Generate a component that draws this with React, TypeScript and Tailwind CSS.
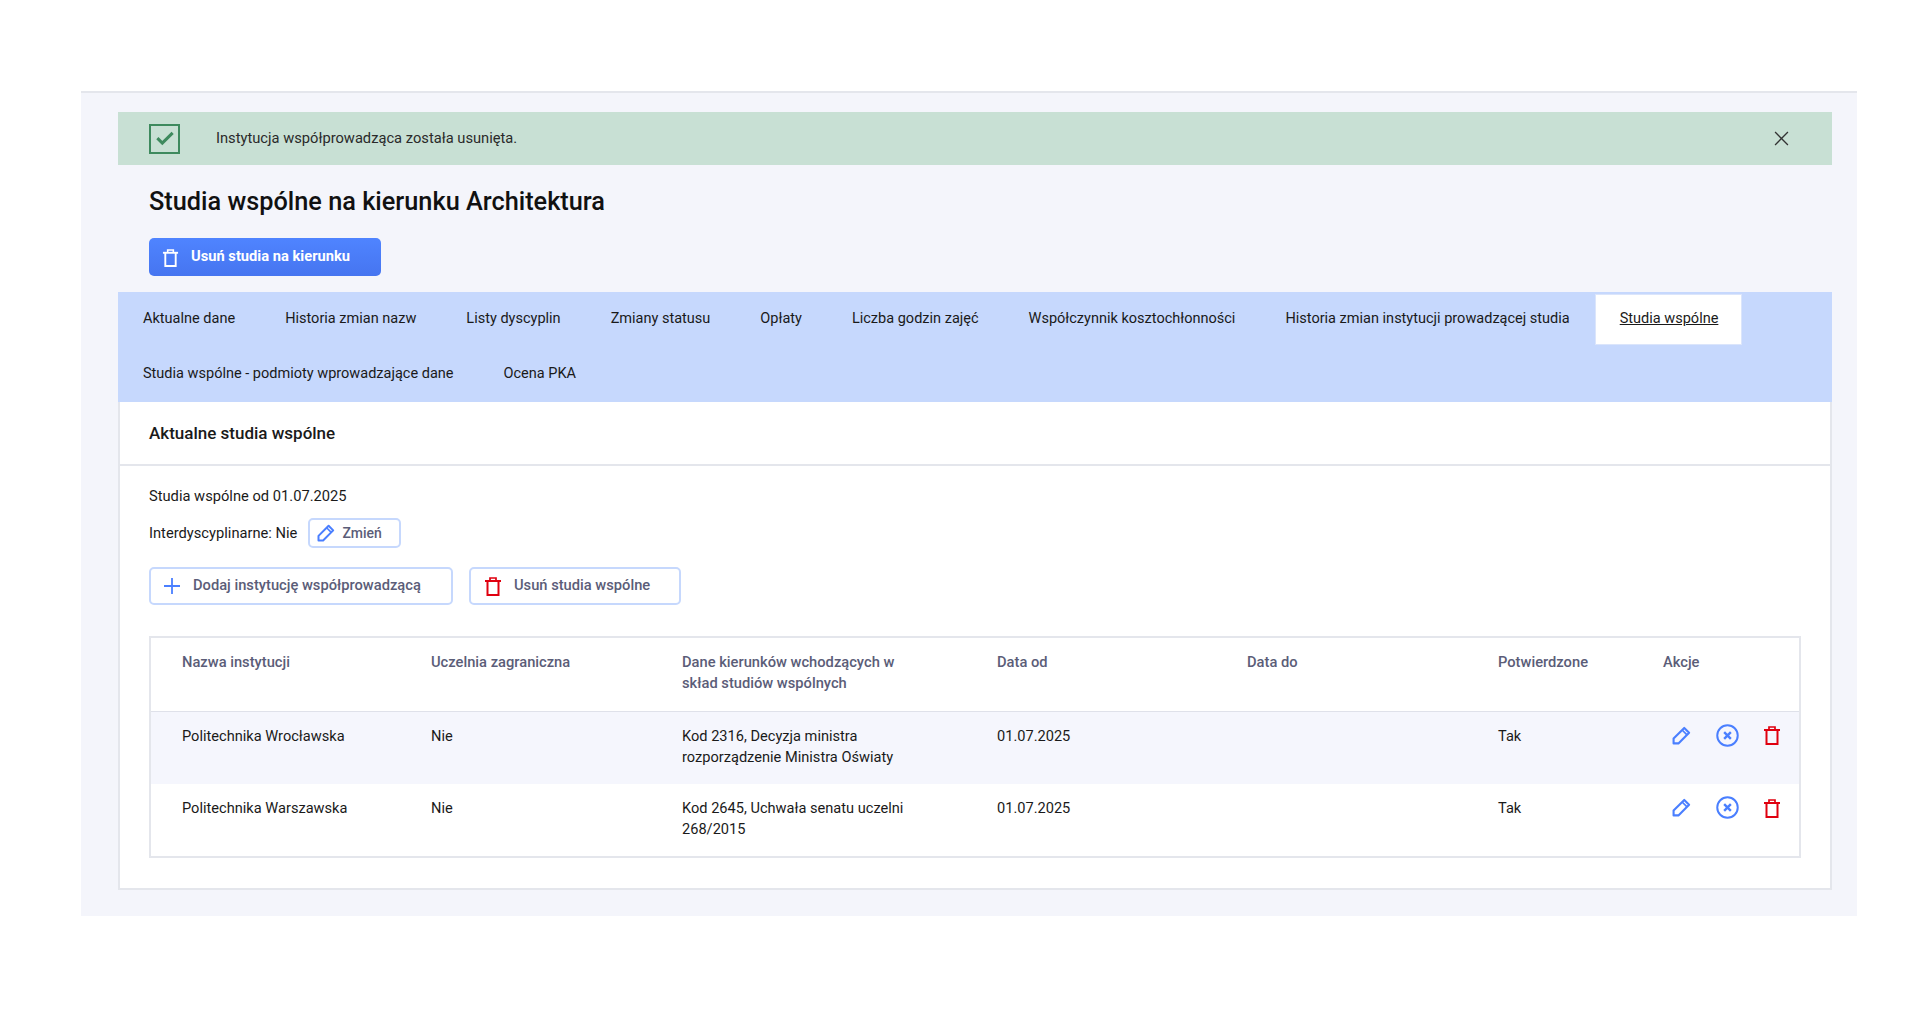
const tabs = [
  'Aktualne dane',
  'Historia zmian nazw',
  'Listy dyscyplin',
  'Zmiany statusu',
  'Opłaty',
  'Liczba godzin zajęć',
  'Współczynnik kosztochłonności',
  'Historia zmian instytucji prowadzącej studia',
  'Studia wspólne',
  'Studia wspólne - podmioty wprowadzające dane',
  'Ocena PKA',
];

const rows = [
  {
    name: 'Politechnika Wrocławska',
    foreign: 'Nie',
    data: 'Kod 2316, Decyzja ministra rozporządzenie Ministra Oświaty',
    from: '01.07.2025',
    to: '',
    confirmed: 'Tak',
  },
  {
    name: 'Politechnika Warszawska',
    foreign: 'Nie',
    data: 'Kod 2645, Uchwała senatu uczelni 268/2015',
    from: '01.07.2025',
    to: '',
    confirmed: 'Tak',
  },
];

function TrashIcon({ className }: { className: string }) {
  return (
    <svg viewBox="0 0 18 20" fill="none" stroke="currentColor" strokeWidth="2" className={className}>
      <path d="M1 5h16" />
      <path d="M6 5V2h6v3" strokeWidth="1.7" />
      <path d="M3.5 5v14h11V5" />
    </svg>
  );
}

function PencilIcon({ className }: { className: string }) {
  return (
    <svg viewBox="0 0 18 18" fill="none" stroke="currentColor" strokeWidth="2" className={className}>
      <path d="M1.5 16.5v-4.6L11.6 1.8l4.6 4.6L6.1 16.5z" strokeLinejoin="round" />
      <path d="M9.6 3.8l4.6 4.6" strokeWidth="1.6" />
    </svg>
  );
}

function CircleXIcon({ className }: { className: string }) {
  return (
    <svg viewBox="0 0 22 22" fill="none" stroke="currentColor" className={className}>
      <circle cx="11" cy="11" r="9.8" strokeWidth="1.9" />
      <path d="M7.8 7.8l6.4 6.4M14.2 7.8l-6.4 6.4" strokeWidth="2.3" />
    </svg>
  );
}

function OutlineButton({ icon, label, className }: { icon: React.ReactNode; label: string; className: string }) {
  return (
    <button
      type="button"
      className={`flex h-[38px] items-center rounded-[5px] border-2 border-[#c6d8fd] bg-white text-[14.7px] font-medium text-[#5b5d78] ${className}`}
    >
      {icon}
      <span className="pb-[1px]">{label}</span>
    </button>
  );
}

export default function App() {
  return (
    <div className="min-h-[1032px] bg-white pt-[91px] font-['Roboto',sans-serif] text-[14.7px] text-[#1a1a1a]">
      <div className="ml-[81px] h-[825px] w-[1776px] border-t-2 border-[#e4e6ec] bg-[#f4f5fb] pl-[37px] pr-[25px] pt-[19px]">
        <div className="flex h-[53px] items-center bg-[#c8e0d4] pl-[31px] pr-[43px]">
          <div className="flex h-[30px] w-[31px] items-center justify-center border-2 border-[#3e8a5e]">
            <svg viewBox="0 0 20 16" fill="none" stroke="#3e8a5e" strokeWidth="3.4" className="w-[18px]">
              <path d="M1.5 8l5.5 5.5L18.5 2" />
            </svg>
          </div>
          <span className="ml-[36px] pb-[1px] text-[14.7px] text-[#2a2a2a]">
            Instytucja współprowadząca została usunięta.
          </span>
          <svg viewBox="0 0 14 14" fill="none" stroke="#333" strokeWidth="1.2" className="ml-auto h-[15px] w-[15px]">
            <path d="M1 1l12 12M13 1L1 13" />
          </svg>
        </div>

        <h1 className="ml-[31px] mt-[19px] text-[25.3px] leading-[36px] font-medium text-[#111]">
          Studia wspólne na kierunku Architektura
        </h1>

        <button
          type="button"
          className="ml-[31px] mt-[18px] flex h-[38px] w-[232px] items-center rounded-[5px] bg-linear-to-b from-[#4f84ff] to-[#4675f0] pl-[13px] text-[14.7px] font-bold text-white"
        >
          <TrashIcon className="h-[19px] w-[17px]" />
          <span className="ml-[12px] pb-[2px]">Usuń studia na kierunku</span>
        </button>

        <div className="mt-[16px] flex h-[110px] flex-wrap content-start bg-[#c6d8fd] pt-[2px] text-[14.52px]">
          {tabs.map((tab) => (
            <a
              key={tab}
              className={
                tab === 'Studia wspólne'
                  ? 'mb-[4px] flex h-[51px] items-center border border-[#dbe5fb] bg-white pb-[1px] pl-6 pr-[23px] text-[#1a1a1a] underline'
                  : 'mb-[4px] flex h-[51px] items-center border border-transparent px-6 pb-[1px] text-[#1a1a1a]'
              }
            >
              {tab}
            </a>
          ))}
        </div>

        <div className="h-[488px] border-x-2 border-b-2 border-[#e4e6ec] bg-white">
          <div className="flex h-[64px] items-center border-b-2 border-[#e4e6ec] pl-[29px] pt-[2px] text-[17px] font-medium text-[#1a1a1a]">
            Aktualne studia wspólne
          </div>
          <div className="px-[29px] pt-[20px]">
            <p className="leading-[21px]">Studia wspólne od 01.07.2025</p>
            <div className="mt-[11px] flex items-center">
              <span>Interdyscyplinarne: Nie</span>
              <button
                type="button"
                className="ml-[11px] flex h-[30px] w-[93px] items-center rounded-[5px] border-2 border-[#c6d8fd] pl-[7px] text-sm font-medium text-[#5b5d78]"
              >
                <PencilIcon className="h-[18px] w-[18px] text-[#4a7fff]" />
                <span className="ml-[7px]">Zmień</span>
              </button>
            </div>
            <div className="mt-[19px] flex gap-[16px]">
              <OutlineButton
                className="w-[304px] pl-[13px]"
                label="Dodaj instytucję współprowadzącą"
                icon={
                  <svg viewBox="0 0 16 16" fill="none" stroke="#4a7fff" strokeWidth="1.8" className="mr-[13px] h-[16px] w-[16px]">
                    <path d="M8 0v16M0 8h16" />
                  </svg>
                }
              />
              <OutlineButton
                className="w-[212px] pl-[13px]"
                label="Usuń studia wspólne"
                icon={<TrashIcon className="mr-[12px] h-[20px] w-[18px] text-[#e0000f]" />}
              />
            </div>

            <table className="mt-[31px] w-[1652px] table-fixed border-2 border-[#e4e6ec]">
              <colgroup>
                <col className="w-[249px]" />
                <col className="w-[251px]" />
                <col className="w-[315px]" />
                <col className="w-[250px]" />
                <col className="w-[251px]" />
                <col className="w-[165px]" />
                <col />
              </colgroup>
              <thead>
                <tr className="h-[74px] border-b border-[#dfe1ea] text-left align-top text-[14.7px]">
                  {[
                    'Nazwa instytucji',
                    'Uczelnia zagraniczna',
                    'Dane kierunków wchodzących w skład studiów wspólnych',
                    'Data od',
                    'Data do',
                    'Potwierdzone',
                    'Akcje',
                  ].map((h) => (
                    <th key={h} className="pl-8 pr-10 pt-[14px] leading-[21px] font-medium text-[#5b5d78] first:pl-[31px]">
                      {h}
                    </th>
                  ))}
                </tr>
              </thead>
              <tbody className="text-[14.6px]">
                {rows.map((row, i) => (
                  <tr key={row.name} className={i === 0 ? 'h-[73px] bg-[#f5f6fd] align-top' : 'h-[73px] align-top'}>
                    <td className="pl-[31px] pr-6 pt-[14px] leading-[21px]">{row.name}</td>
                    <td className="pl-8 pr-6 pt-[14px] leading-[21px]">{row.foreign}</td>
                    <td className="pl-8 pr-6 pt-[14px] leading-[21px]">{row.data}</td>
                    <td className="pl-8 pr-6 pt-[14px] leading-[21px]">{row.from}</td>
                    <td className="pl-8 pr-6 pt-[14px] leading-[21px]">{row.to}</td>
                    <td className="pl-8 pr-6 pt-[14px] leading-[21px]">{row.confirmed}</td>
                    <td className="pl-[41px] pt-[12px]">
                      <div className="flex items-center">
                        <PencilIcon className="h-[19px] w-[19px] text-[#4a7fff]" />
                        <CircleXIcon className="ml-[25px] h-[23px] w-[23px] text-[#4a7fff]" />
                        <TrashIcon className="ml-[24px] h-[20px] w-[18px] text-[#e0000f]" />
                      </div>
                    </td>
                  </tr>
                ))}
              </tbody>
            </table>
          </div>
        </div>
      </div>
    </div>
  );
}
